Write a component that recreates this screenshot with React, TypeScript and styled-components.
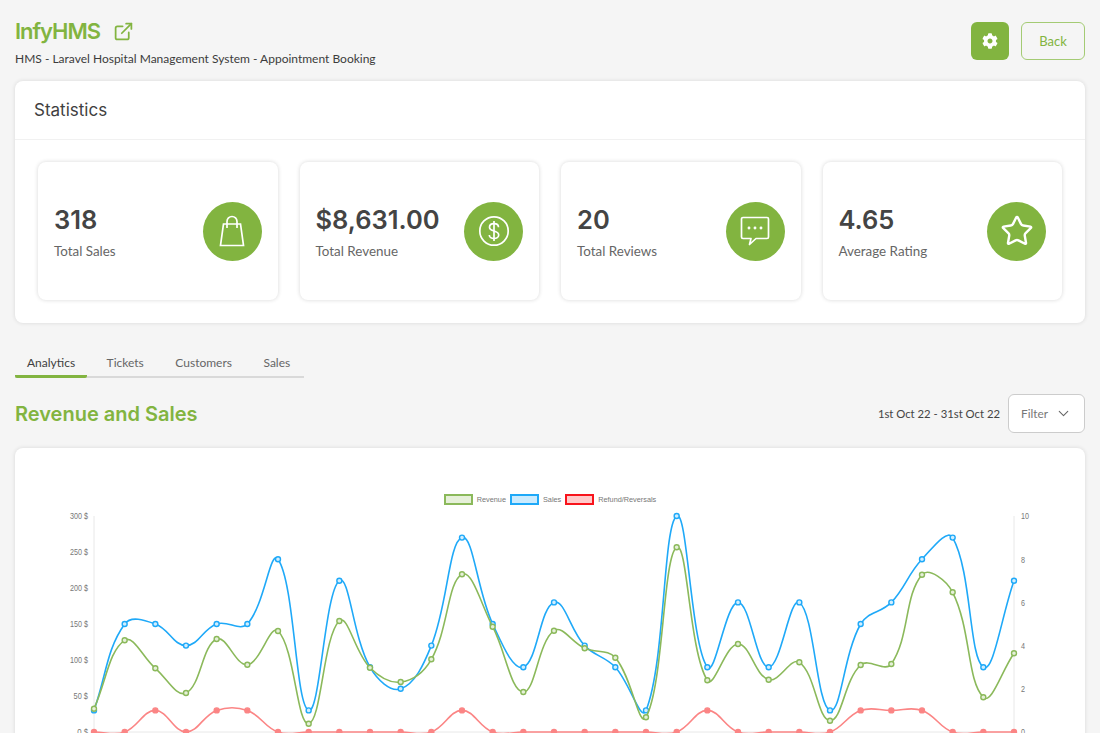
import React from 'react'
import styled, { createGlobalStyle } from 'styled-components'
import { ChevronDown, ExternalLink, Star } from 'lucide-react'
import { FaCog } from 'react-icons/fa'

const GREEN = '#82b440'
const SMALL_FONT = 'Lato, "Liberation Sans", sans-serif'

const GlobalStyle = createGlobalStyle`
html, body {
  margin: 0;
  height: 733px;
  overflow: hidden;
  background: #f5f5f5;
  font-family: Inter, "Liberation Sans", sans-serif;
}
* { box-sizing: border-box; }
`

const stats = [
  { value: '318', label: 'Total Sales', icon: 'bag' },
  { value: '$8,631.00', label: 'Total Revenue', icon: 'dollar' },
  { value: '20', label: 'Total Reviews', icon: 'chat' },
  { value: '4.65', label: 'Average Rating', icon: 'star' },
]

const tabs = ['Analytics', 'Tickets', 'Customers', 'Sales']

// chart data, sales + refunds are in units (right axis), revenue in screen px read from the picture
const sales = [1, 5, 5, 4, 5, 5, 8, 1, 7, 3, 2, 4, 9, 5, 3, 6, 4, 3, 1, 10, 3, 6, 3, 6, 1, 5, 6, 8, 9, 3, 7]
const refunds = [0, 0, 1, 0, 1, 1, 0, 0, 0, 0, 0, 0, 1, 0, 0, 0, 0, 0, 0, 0, 1, 0, 0, 0, 0, 1, 1, 1, 0, 0, 0]
const revenueY = [
  708.7, 640.3, 668.3, 693, 639, 664.7, 631, 723.7, 621, 667.7, 682, 659.3, 574.3, 626.7, 692, 630.7,
  648.3, 657.7, 717.3, 547.3, 680.3, 644, 679.7, 662.3, 720.7, 665, 664, 574.7, 592.3, 697.3, 653.3,
]

const CHART_LEFT = 15
const CHART_TOP = 509
const X0 = 94 - CHART_LEFT
const X1 = 1014 - CHART_LEFT
const Y_TOP = 516 - CHART_TOP
const Y_BOTTOM = 732 - CHART_TOP

type Pt = { x: number; y: number }

const xAt = (i: number) => X0 + ((X1 - X0) * i) / 30
const fromUnits = (list: number[]): Pt[] =>
  list.map((v, i) => ({ x: xAt(i), y: Y_BOTTOM - (v * (Y_BOTTOM - Y_TOP)) / 10 }))
const fromScreen = (list: number[]): Pt[] => list.map((v, i) => ({ x: xAt(i), y: v - CHART_TOP }))

// same spline chart.js uses for a line with tension
function splinePath(pts: Pt[], t = 0.4) {
  const ctrl = pts.map((p, i) => {
    const prev = pts[i - 1] || p
    const next = pts[i + 1] || p
    const d01 = Math.hypot(p.x - prev.x, p.y - prev.y)
    const d12 = Math.hypot(next.x - p.x, next.y - p.y)
    const sum = d01 + d12 || 1
    const fa = (t * d01) / sum
    const fb = (t * d12) / sum
    return {
      inn: { x: p.x - fa * (next.x - prev.x), y: p.y - fa * (next.y - prev.y) },
      out: { x: p.x + fb * (next.x - prev.x), y: p.y + fb * (next.y - prev.y) },
    }
  })
  let d = `M${pts[0].x} ${pts[0].y}`
  for (let i = 1; i < pts.length; i++) {
    const a = ctrl[i - 1].out
    const b = ctrl[i].inn
    d += `C${a.x} ${a.y} ${b.x} ${b.y} ${pts[i].x} ${pts[i].y}`
  }
  return d
}

const series = [
  { pts: fromUnits(refunds), color: '#fb8585', fill: '#fb8585' },
  { pts: fromUnits(sales), color: '#1fa9f8', fill: '#d2eefe' },
  { pts: fromScreen(revenueY), color: '#8bb95b', fill: '#e6f0d9' },
]

const leftTicks = ['300 $', '250 $', '200 $', '150 $', '100 $', '50 $', '0 $']
const rightTicks = ['10', '8', '6', '4', '2', '0']

function StatIcon({ name }: { name: string }) {
  if (name === 'bag') {
    return (
      <svg width="26" height="32" viewBox="0 0 26 32" fill="none" stroke="#fff" strokeWidth="1.7">
        <path d="M4.5 9H21.5L24.5 30.5H1.5Z" strokeLinejoin="miter" />
        <path d="M8 13V6.5a5 5 0 0 1 10 0V13" />
      </svg>
    )
  }
  if (name === 'dollar') {
    return (
      <svg width="32" height="32" viewBox="0 0 32 32" fill="none" stroke="#fff" strokeWidth="1.7">
        <circle cx="16" cy="16" r="14.2" />
        <path d="M20.5 12.2c0-2.2-2-3.6-4.5-3.6s-4.5 1.4-4.5 3.6c0 4.900 9.200 2.700 9.200 7.700 0 2.200-2.200 3.600-4.700 3.600s-4.700-1.400-4.700-3.600" />
        <path d="M16 6v20" />
      </svg>
    )
  }
  if (name === 'chat') {
    return (
      <svg width="30" height="30" viewBox="0 0 30 30" fill="none" stroke="#fff" strokeWidth="1.7" strokeLinecap="round" strokeLinejoin="round">
        <path d="M3 1.500H27a1.500 1.500 0 0 1 1.500 1.500V21a1.500 1.500 0 0 1-1.500 1.500H16L9.500 28.500 11 22.500H3A1.500 1.500 0 0 1 1.500 21V3A1.500 1.500 0 0 1 3 1.500Z" />
        <circle cx="9" cy="12" r="0.6" fill="#fff" />
        <circle cx="15" cy="12" r="0.6" fill="#fff" />
        <circle cx="21" cy="12" r="0.6" fill="#fff" />
      </svg>
    )
  }
  return <Star size={34} color="#fff" strokeWidth={1.7} />
}

function Chart() {
  return (
    <ChartSvg viewBox="0 0 1070 240" width="1070" height="240">
      <line x1={X0} y1={Y_TOP} x2={X0} y2={Y_BOTTOM} stroke="#e8e8e8" />
      <line x1={X1} y1={Y_TOP} x2={X1} y2={Y_BOTTOM} stroke="#e8e8e8" />
      <line x1={X0} y1={Y_BOTTOM} x2={X1} y2={Y_BOTTOM} stroke="#e8e8e8" />
      {leftTicks.map((label, i) => (
        <AxisText
          key={label}
          x={X0 - 6}
          y={Y_TOP + i * 36 + 3.3}
          textAnchor="end"
          textLength={label.length * 3.6}
          lengthAdjust="spacingAndGlyphs"
        >
          {label}
        </AxisText>
      ))}
      {rightTicks.map((label, i) => (
        <AxisText
          key={label}
          x={X1 + 7}
          y={Y_TOP + i * 43.2 + 3.3}
          textLength={label.length * 4}
          lengthAdjust="spacingAndGlyphs"
        >
          {label}
        </AxisText>
      ))}
      {series.map((s) => (
        <g key={s.color}>
          <path d={splinePath(s.pts)} fill="none" stroke={s.color} strokeWidth="1.6" />
          {s.pts.map((p, i) => (
            <circle key={i} cx={p.x} cy={p.y} r="2.5" fill={s.fill} stroke={s.color} strokeWidth="1.4" />
          ))}
        </g>
      ))}
    </ChartSvg>
  )
}

export default function App() {
  return (
    <Page>
      <GlobalStyle />
      <Header>
        <div>
          <TitleRow>
            <Title>InfyHMS</Title>
            <ExternalLink size={21} color={GREEN} strokeWidth={2} />
          </TitleRow>
          <Subtitle>HMS - Laravel Hospital Management System - Appointment Booking</Subtitle>
        </div>
        <Actions>
          <GearButton><FaCog size={16} color="#fff" /></GearButton>
          <BackButton>Back</BackButton>
        </Actions>
      </Header>

      <Card>
        <CardHead>Statistics</CardHead>
        <StatGrid>
          {stats.map((s) => (
            <StatCard key={s.label}>
              <div>
                <StatValue>{s.value}</StatValue>
                <StatLabel>{s.label}</StatLabel>
              </div>
              <IconCircle><StatIcon name={s.icon} /></IconCircle>
            </StatCard>
          ))}
        </StatGrid>
      </Card>

      <Tabs>
        {tabs.map((t, i) => (
          <Tab key={t} $active={i === 0}>{t}</Tab>
        ))}
      </Tabs>

      <SectionRow>
        <SectionTitle>Revenue and Sales</SectionTitle>
        <FilterWrap>
          <DateRange>1st Oct 22 - 31st Oct 22</DateRange>
          <FilterBox>
            Filter
            <ChevronDown size={17} color="#666" strokeWidth={1.5} />
          </FilterBox>
        </FilterWrap>
      </SectionRow>

      <ChartCard>
        <Legend>
          <LegendItem><LegendBox $border="#8bb95b" $fill="#e6f0d9" />Revenue</LegendItem>
          <LegendItem><LegendBox $border="#1fa9f8" $fill="#cbebfe" />Sales</LegendItem>
          <LegendItem><LegendBox $border="#f8141c" $fill="#ffcaca" />Refund/Reversals</LegendItem>
        </Legend>
        <Chart />
      </ChartCard>
    </Page>
  )
}

const Page = styled.div`
  height: 733px;
  overflow: hidden;
  padding: 15px 15px 0;
`

const Header = styled.div`
  display: flex;
  justify-content: space-between;
  align-items: flex-start;
  height: 66px;
`

const TitleRow = styled.div`
  display: flex;
  align-items: center;
  gap: 13px;
  height: 32px;
`

const Title = styled.h1`
  margin: 0;
  font-size: 22px;
  font-weight: 600;
  letter-spacing: -1px;
  color: ${GREEN};
`

const Subtitle = styled.div`
  margin-top: 4px;
  font-family: ${SMALL_FONT};
  font-size: 12px;
  line-height: 16px;
  color: #3c3c3c;
`

const Actions = styled.div`
  display: flex;
  gap: 12px;
  margin-top: 7px;
`

const GearButton = styled.button`
  width: 38px;
  height: 38px;
  padding: 0;
  display: flex;
  align-items: center;
  justify-content: center;
  border: 0;
  border-radius: 6px;
  background: ${GREEN};
`

const BackButton = styled.button`
  width: 64px;
  height: 38px;
  padding: 0;
  border: 1px solid #a4cb74;
  border-radius: 6px;
  background: transparent;
  color: ${GREEN};
  font-family: ${SMALL_FONT};
  font-size: 13px;
`

const Card = styled.section`
  background: #fff;
  border-radius: 8px;
  box-shadow: 0 0 4px rgba(0, 0, 0, 0.12);
`

const CardHead = styled.div`
  height: 59px;
  padding: 0 19px;
  display: flex;
  align-items: center;
  font-size: 17px;
  color: #3f3f3f;
  border-bottom: 1px solid #f1f1f1;
`

const StatGrid = styled.div`
  display: grid;
  grid-template-columns: repeat(4, 1fr);
  gap: 22px;
  padding: 22px 23px 23px;
`

const StatCard = styled.div`
  height: 138px;
  padding: 0 16px;
  display: flex;
  align-items: center;
  justify-content: space-between;
  border-radius: 8px;
  box-shadow: 0 0 4px rgba(0, 0, 0, 0.16);
`

const StatValue = styled.div`
  margin-top: 2px;
  font-size: 25.5px;
  font-weight: 600;
  line-height: 30px;
  color: #444;
`

const StatLabel = styled.div`
  margin-top: 8px;
  font-family: ${SMALL_FONT};
  font-size: 13.4px;
  line-height: 16px;
  color: #666;
`

const IconCircle = styled.div`
  flex: none;
  width: 59px;
  height: 59px;
  border-radius: 50%;
  background: ${GREEN};
  display: flex;
  align-items: center;
  justify-content: center;
`

const Tabs = styled.div`
  display: flex;
  gap: 7.5px;
  width: 289px;
  margin-top: 31px;
  border-bottom: 2px solid #d9d9d9;
`

const Tab = styled.div<{ $active?: boolean }>`
  padding: 0 12px;
  height: 24px;
  margin-bottom: -2px;
  font-family: ${SMALL_FONT};
  font-size: 12px;
  line-height: 18px;
  color: ${(p) => (p.$active ? '#3f3f3f' : '#666')};
  border-bottom: 3px solid ${(p) => (p.$active ? GREEN : 'transparent')};
  border-radius: 2px;
`

const SectionRow = styled.div`
  display: flex;
  justify-content: space-between;
  align-items: center;
  margin-top: 16px;
  height: 39px;
`

const SectionTitle = styled.h2`
  margin: 0;
  font-size: 20px;
  font-weight: 600;
  color: ${GREEN};
`

const FilterWrap = styled.div`
  display: flex;
  align-items: center;
  gap: 8px;
`

const DateRange = styled.div`
  font-family: ${SMALL_FONT};
  font-size: 11.3px;
  color: #444;
`

const FilterBox = styled.div`
  width: 77px;
  height: 39px;
  padding: 0 12px;
  display: flex;
  align-items: center;
  justify-content: space-between;
  background: #fff;
  border: 1px solid #ccc;
  border-radius: 6px;
  font-family: ${SMALL_FONT};
  font-size: 11.8px;
  color: #777;
`

const ChartCard = styled.section`
  margin-top: 15px;
  height: 400px;
  background: #fff;
  border-radius: 8px;
  box-shadow: 0 0 4px rgba(0, 0, 0, 0.12);
  padding-top: 46px;
`

const Legend = styled.div`
  display: flex;
  justify-content: center;
  gap: 4px;
  height: 15px;
`

const LegendItem = styled.div`
  display: flex;
  align-items: center;
  gap: 4px;
  height: 11px;
  font-family: "Liberation Sans", Arial, sans-serif;
  font-size: 7.3px;
  color: #777;
`

const LegendBox = styled.span<{ $border: string; $fill: string }>`
  width: 29px;
  height: 11px;
  border: 2px solid ${(p) => p.$border};
  background: ${(p) => p.$fill};
`

const ChartSvg = styled.svg`
  display: block;
  overflow: visible;
`

const AxisText = styled.text`
  font-family: "Liberation Sans", Arial, sans-serif;
  font-size: 9.5px;
  fill: #777;
`
